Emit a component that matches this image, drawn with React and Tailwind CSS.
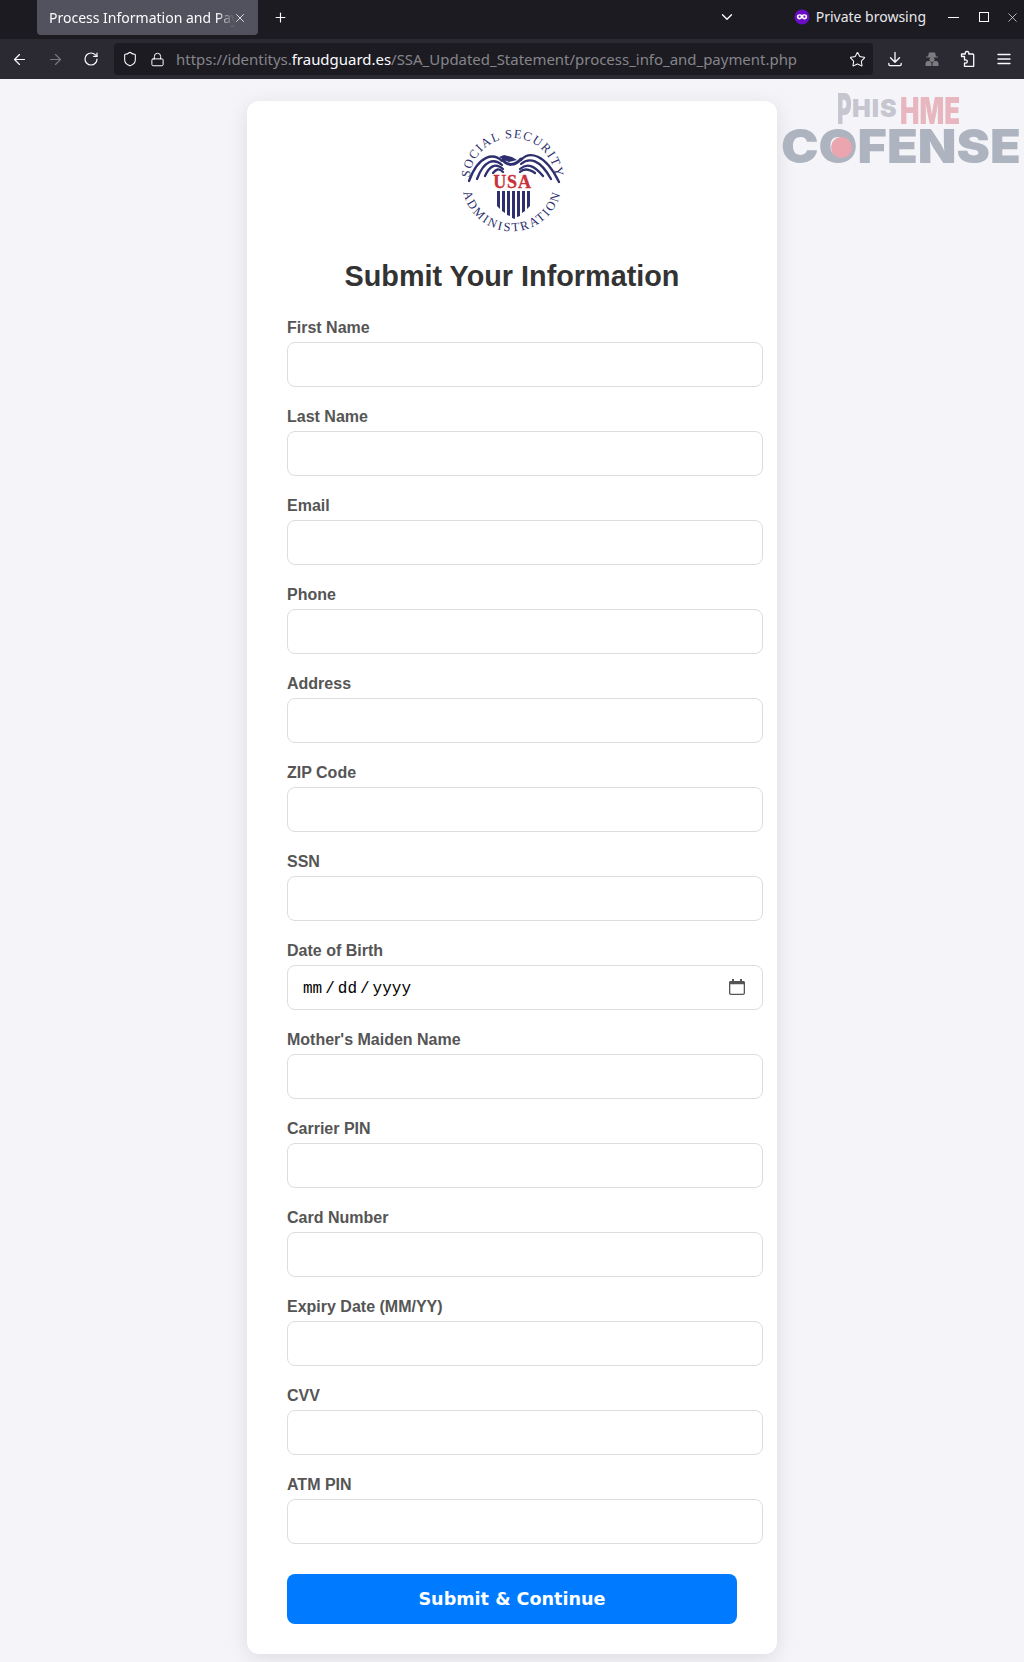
import React from "react";
import { ArrowLeft, ArrowRight, RotateCw, Shield, Lock, Star, Plus, X, ChevronDown } from "lucide-react";

const fields = ["First Name","Last Name","Email","Phone","Address","ZIP Code","SSN","Date of Birth","Mother's Maiden Name","Carrier PIN","Card Number","Expiry Date (MM/YY)","CVV","ATM PIN"];

function Seal() {
  return (
    <svg width="110" height="112" viewBox="0 0 110 112" className="block overflow-visible" aria-label="Social Security Administration">
      <defs>
        <path id="sealTop" d="M13.500 65.200 A43 43 0 1 1 97.500 65.200" />
        <path id="sealBottom" d="M5.400 50 A50 50 0 1 0 104.600 50" />
      </defs>
      <text fill="#2e2f6e" fontSize="12.500" letterSpacing="1.300" fontFamily="'Liberation Serif', serif"><textPath href="#sealTop" startOffset="50%" textAnchor="middle">SOCIAL SECURITY</textPath></text>
      <text fill="#2e2f6e" fontSize="12.500" letterSpacing="2" fontFamily="'Liberation Serif', serif"><textPath href="#sealBottom" startOffset="50%" textAnchor="middle">ADMINISTRATION</textPath></text>
      <g fill="none" stroke="#2e2f6e" strokeLinecap="round">
        <path strokeWidth="2.300" d="M45 36 C37 28 22 29 12 56" />
        <path strokeWidth="2.300" d="M45 40 C37 33 27 35 20 54" />
        <path strokeWidth="2.300" d="M46 44 C39 38 33 40 28 51" />
        <path strokeWidth="2.300" d="M46 47 C42 43 39 44 36 48" />
        <path strokeWidth="2.300" d="M64 35 C72 26 88 28 102 57" />
        <path strokeWidth="2.300" d="M64 39 C72 32 83 34 94 54" />
        <path strokeWidth="2.300" d="M63 44 C70 38 77 40 86 51" />
        <path strokeWidth="2.300" d="M63 47 C67 43 72 44 78 48" />
        <path strokeWidth="3" d="M46 35 C50 41 58 41 64 34" />
      </g>
      <path fill="#2e2f6e" d="M42 32 L47 30 L55 32 L60 35 L52 37 L47 35 Z" />
      <rect x="35" y="49" width="41" height="16" fill="#fff" />
      <text x="55.500" y="63" textAnchor="middle" fill="#c8303a" stroke="#c8303a" strokeWidth="0.300" fontSize="18" fontWeight="700" letterSpacing="0.800" fontFamily="'Liberation Serif', serif">USA</text>
      <g fill="#2e2f6e">
        <path d="M40 66h3v18l-3-3z" />
        <path d="M45 66h3v22l-3-2z" />
        <path d="M50 66h3v25l-3-1z" />
        <path d="M55 66h3v28l-3-1z" />
        <path d="M60 66h3v25l-3 1z" />
        <path d="M65 66h3v20l-3 2z" />
        <path d="M70 66h3v15l-3 3z" />
      </g>
    </svg>
  );
}

function PrivateIcon() {
  return (
    <svg width="16" height="16" viewBox="0 0 16 16" aria-hidden="true">
      <circle cx="8" cy="8" r="7.500" fill="#6a0dc4" />
      <path fill="#fff" d="M2.800 7.500c0-1.600 1.500-2.300 2.800-2.300 1 0 1.700.6 2.400.6s1.400-.6 2.400-.6c1.300 0 2.800.7 2.800 2.300 0 1.900-1.300 3-2.700 3-1.300 0-1.800-1.300-2.500-1.300s-1.200 1.300-2.500 1.300c-1.400 0-2.700-1.100-2.700-3z" />
      <circle cx="5.600" cy="7.700" r="1.100" fill="#6a0dc4" />
      <circle cx="10.400" cy="7.700" r="1.100" fill="#6a0dc4" />
    </svg>
  );
}

function Incognito() {
  return (
    <svg width="16" height="16" viewBox="0 0 16 16" fill="#7b7b80" aria-hidden="true" className="block">
      <path d="M5 1.500h6l1 4h2v1H2v-1h2z" />
      <circle cx="8" cy="8.500" r="2.500" />
      <path d="M1.500 15v-2.500c0-1.500 1-2.500 2.500-2.500h1.500l2 2v3zM14.500 15v-2.500c0-1.500-1-2.500-2.500-2.500h-1.500l-2 2v3z" />
    </svg>
  );
}

function DownloadIcon() {
  return (
    <svg width="16" height="16" viewBox="0 0 16 16" fill="none" stroke="currentColor" strokeWidth="1.300" strokeLinecap="round" strokeLinejoin="round" aria-hidden="true" className="block">
      <path d="M8 1.500v9.500M3.500 6.800 8 11.200l4.500-4.400M1.800 12.500v.8c0 .8.600 1.300 1.300 1.300h9.800c.7 0 1.300-.5 1.300-1.300v-.8" />
    </svg>
  );
}

function ExtensionIcon() {
  return (
    <svg width="16" height="18" viewBox="0 0 16 18" fill="none" stroke="currentColor" strokeWidth="1.300" strokeLinejoin="round" aria-hidden="true" className="block">
      <path d="M7 1.500c1.500 0 2 1 1.700 2.500h4c.6 0 1 .4 1 1v11.300H4.500v-3.300c1.600.6 2.800-.2 2.800-1.500S6 9.500 4.500 10.100V6.500H1.500V4H5.300C5 2.500 5.500 1.500 7 1.500z" />
    </svg>
  );
}

function HamburgerIcon() {
  return (
    <svg width="14" height="12" viewBox="0 0 14 12" stroke="currentColor" strokeWidth="1.300" strokeLinecap="round" aria-hidden="true" className="block">
      <path d="M1 1.500h12M1 6h12M1 10.500h12" />
    </svg>
  );
}

function CalendarIcon() {
  return (
    <svg width="16" height="16" viewBox="0 0 16 16" aria-hidden="true" className="block mb-[4px]">
      <path fill="#555" d="M3 0h2v2h6V0h2v2h1.500C15.300 2 16 2.700 16 3.500V14c0 1.100-.9 2-2 2H2c-1.100 0-2-.9-2-2V3.500C0 2.700.7 2 1.500 2H3z" />
      <path fill="#fff" d="M1.300 5.300h13.400V14c0 .4-.3.700-.7.700H2c-.4 0-.7-.3-.7-.7z" />
    </svg>
  );
}

function Chrome() {
  return (
    <div className="bg-[#1c1b22] text-[#fbfbfe] font-['Noto_Sans',sans-serif]">
      <div className="h-[39px] flex items-start">
        <div className="ml-[37px] w-[221px] h-[35px] rounded-b-[4px] bg-[#52525e] flex items-center pl-[12px] pr-[11px] text-[14px]">
          <span className="whitespace-nowrap overflow-hidden flex-1 min-w-0 mr-[-2px] [mask-image:linear-gradient(to_right,black_90%,transparent)]">Process Information and Payment</span>
          <X size={14} strokeWidth={1.400} className="shrink-0 relative" />
        </div>
        <Plus size={15} strokeWidth={1.800} className="ml-[15px] mt-[10px]" />
        <div className="flex-1" />
        <ChevronDown size={18} strokeWidth={1.800} className="mt-[8px] mr-[58px]" />
        <div className="flex items-center mt-[9px] text-[14px] leading-[16px] text-[#e8e8ea]">
          <PrivateIcon />
          <span className="ml-[6px]">Private browsing</span>
        </div>
        <span className="ml-[22px] mt-[17px] w-[11px] h-px bg-[#fbfbfe]" />
        <span className="ml-[20px] mt-[12px] w-[10px] h-[10px] border border-[#fbfbfe]" />
        <X size={15} strokeWidth={1.100} className="ml-[16px] mr-[4px] mt-[10px]" />
      </div>
      <div className="h-[40px] bg-[#2b2a33] flex items-center">
        <ArrowLeft size={17} strokeWidth={1.700} className="ml-[11px]" />
        <ArrowRight size={17} strokeWidth={1.700} className="ml-[19px] text-[#77777d]" />
        <RotateCw size={16} strokeWidth={1.800} className="ml-[19px]" />
        <div className="ml-[15px] w-[759px] h-[32px] rounded-[4px] bg-[#1c1b22] flex items-center text-[14.960px]">
          <Shield size={16} strokeWidth={1.600} className="ml-[8px]" />
          <Lock size={15} strokeWidth={1.600} className="ml-[12px]" />
          <div className="ml-[11px] whitespace-nowrap text-[#85858a]">https://identitys.<span className="text-[#fbfbfe]">fraudguard.es</span>/SSA_Updated_Statement/process_info_and_payment.php</div>
          <div className="flex-1" />
          <Star size={17} strokeWidth={1.500} className="mr-[7px]" />
        </div>
        <span className="ml-[14px]"><DownloadIcon /></span>
        <span className="ml-[21px]"><Incognito /></span>
        <span className="ml-[20px]"><ExtensionIcon /></span>
        <span className="ml-[21px]"><HamburgerIcon /></span>
      </div>
    </div>
  );
}

function Watermark() {
  return (
    <div className="absolute left-[783px] top-[92px] w-[240px] h-[80px] font-['Inter',sans-serif] font-black pointer-events-none select-none">
      <span className="absolute left-[54px] top-[-5px] origin-left scale-x-[0.520] text-[43px] leading-[43px] text-[#c6c6d0]">P</span>
      <span className="absolute left-[69px] top-[4px] text-[25px] leading-[25px] tracking-[1px] text-[#c6c6d0]">HIS</span>
      <span className="absolute left-[117px] top-[0px] origin-left scale-x-[0.700] text-[37px] leading-[37px] whitespace-nowrap text-[#e8b6bf]">HME</span>
      <div className="absolute left-[-2px] top-[27px] origin-left scale-x-[1.070] text-[47px] leading-[54px] whitespace-nowrap text-[#adb3bf]">COFENSE</div>
      <div className="absolute left-[48px] top-[45px] w-[21px] h-[21px] rounded-full bg-[#eba5ae]" />
    </div>
  );
}

function DateValue() {
  return (
    <div className="flex items-center box-border w-[476px] h-[45px] pt-[3px] pl-[15px] pr-[17px] border border-[#ddd] rounded-[8px] bg-white text-[16px] text-black font-['Liberation_Mono',monospace]">
      <span>mm</span>
      <span className="mx-[3px] w-[9.600px] text-center">/</span>
      <span>dd</span>
      <span className="mx-[3px] w-[9.600px] text-center">/</span>
      <span>yyyy</span>
      <span className="flex-1" />
      <CalendarIcon />
    </div>
  );
}

function Field({ label }) {
  return (
    <div className="mb-[21px]">
      <label className="block mb-[5px] text-[16px] leading-[18px] font-bold text-[#555]">{label}</label>
      {label === "Date of Birth" ? <DateValue /> : (
        <input type="text" className="block box-border w-[476px] h-[45px] px-[15px] border border-[#ddd] rounded-[8px] text-[16px] bg-white" />
      )}
    </div>
  );
}

export default function App() {
  return (
    <div className="relative w-[1024px] h-[1662px] overflow-hidden bg-[#f4f4f9] font-['Liberation_Sans',sans-serif]">
      <Chrome />
      <Watermark />
      <main className="flex justify-center pt-[22px]">
        <div className="w-[530px] h-[1553px] box-border bg-white rounded-[12px] shadow-[0_4px_20px_rgba(0,0,0,0.1)] px-[40px] pt-[24px]">
          <div className="flex justify-center"><Seal /></div>
          <h1 className="mt-[22px] mb-[26px] text-center text-[28.800px] leading-[34px] font-bold text-[#333]">Submit Your Information</h1>
          {fields.map((f) => <Field key={f} label={f} />)}
          <button className="block mt-[30px] w-[450px] h-[50px] rounded-[8px] bg-[#007bff] text-white text-[17.600px] font-bold font-['DejaVu_Sans',sans-serif]">Submit &amp; Continue</button>
        </div>
      </main>
    </div>
  );
}
